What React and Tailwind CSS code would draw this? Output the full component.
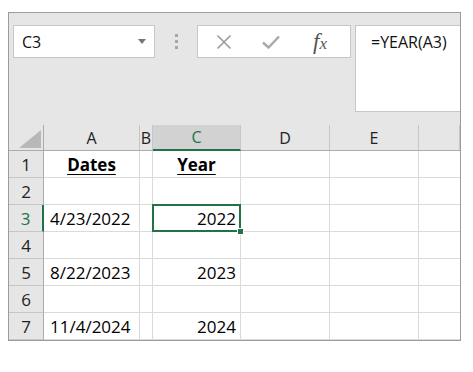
import React from 'react';

const cols = ['A', 'B', 'C', 'D', 'E', ''];

const rows = [
	{ n: 1, a: 'Dates', c: 'Year', head: true },
	{ n: 2, a: '', c: '' },
	{ n: 3, a: '4/23/2022', c: '2022', sel: true },
	{ n: 4, a: '', c: '' },
	{ n: 5, a: '8/22/2023', c: '2023' },
	{ n: 6, a: '', c: '' },
	{ n: 7, a: '11/4/2024', c: '2024' },
];

const gridCols = 'grid grid-cols-[35px_96px_13px_88px_89px_89px_1fr] grid-rows-[100%]';

const Toolbar = () => (
	<div className="flex items-start h-[112px] pt-[12px] pl-[4px]">
		<div className="w-[142px] h-[33px] bg-white border border-[#c6c6c6] flex items-center justify-between pl-[8px] pr-[8px]">
			<span className="text-[16px] text-[#111]">C3</span>
			<svg width="8" height="5" viewBox="0 0 8 5">
				<path d="M0 0 L8 0 L4 5 Z" fill="#777" />
			</svg>
		</div>
		<div className="w-[42px] h-[33px] flex flex-col items-center justify-center gap-[3px]">
			<div className="w-[3px] h-[3px] bg-[#a6a6a6]" />
			<div className="w-[3px] h-[3px] bg-[#a6a6a6]" />
			<div className="w-[3px] h-[3px] bg-[#a6a6a6]" />
		</div>
		<div className="w-[154px] h-[33px] bg-white border border-[#c6c6c6] flex items-center">
			<div className="w-[50px] flex justify-center pl-[2px]">
				<svg width="16" height="16" viewBox="0 0 16 16">
					<path d="M1.5 1.5 L14.5 14.5 M14.5 1.5 L1.5 14.5" stroke="#9b9b9b" strokeWidth="1.6" fill="none" />
				</svg>
			</div>
			<div className="w-[46px] flex justify-center">
				<svg width="18" height="14" viewBox="0 0 18 14">
					<path d="M1 7.5 L6.5 12.5 L17 1.5" stroke="#a8a8a8" strokeWidth="2.4" fill="none" />
				</svg>
			</div>
			<div className="flex-1 flex justify-center pr-[4px] leading-none">
				<span className="text-[23px] italic text-[#555] font-['Liberation_Serif',serif]">
					f<span className="text-[17px]">x</span>
				</span>
			</div>
		</div>
		<div className="ml-[4px] flex-1 h-[87px] bg-white border-t border-b border-l border-[#c6c6c6] pl-[15px] pt-[4px]">
			<span className="text-[16px] text-[#111]">=YEAR(A3)</span>
		</div>
	</div>
);

const HeaderRow = () => (
	<div className={`${gridCols} h-[26px] border-b border-[#ababab]`}>
		<div className="relative border-r border-[#ababab]">
			<svg className="absolute right-[2px] bottom-[2px]" width="22" height="18" viewBox="0 0 22 18">
				<path d="M22 0 L22 18 L0 18 Z" fill="#b8b8b8" />
			</svg>
		</div>
		{cols.map((c, i) => {
			const active = c === 'C';
			return (
				<div
					key={i}
					className={
						active
							? 'flex items-center justify-center bg-[#d2d2d2] border-r border-[#c6c6c6] text-[#217346] text-[16px] border-b-2 border-b-[#217346] -mb-[1px]'
							: 'flex items-center justify-center border-r border-[#c6c6c6] text-[#222] text-[16px]'
					}
				>
					{c}
				</div>
			);
		})}
	</div>
);

const Row = ({ row }) => (
	<div className={`${gridCols} h-[27px] leading-[20px]`}>
		<div
			className={
				row.sel
					? 'flex items-center justify-center pt-[1px] border-b border-[#c6c6c6] border-r-2 border-r-[#217346] text-[#217346] text-[17px]'
					: 'flex items-center justify-center pt-[1px] border-b border-[#c6c6c6] border-r border-r-[#ababab] text-[#222] text-[17px]'
			}
		>
			{row.n}
		</div>
		<div className={`flex items-center pt-[2px] border-r border-b border-[#dadada] bg-white text-[17px] text-[#000] ${row.head ? 'justify-center' : 'pl-[6px]'}`}>
			{row.head ? <span className="font-bold underline underline-offset-[3px]">{row.a}</span> : row.a}
		</div>
		<div className="border-r border-b border-[#dadada] bg-white" />
		<div className={`relative flex items-center pt-[2px] border-r border-b border-[#dadada] bg-white text-[17px] text-[#000] ${row.head ? 'justify-center' : 'justify-end pr-[4px]'}`}>
			{row.head ? <span className="font-bold underline underline-offset-[3px]">{row.c}</span> : row.c}
			{row.sel && (
				<div className="absolute z-10 -left-[1px] -top-[1px] -right-[1px] -bottom-[1px] border-2 border-[#217346]">
					<div className="absolute -right-[5px] -bottom-[5px] w-[7px] h-[7px] bg-[#217346] border border-white" />
				</div>
			)}
		</div>
		<div className="border-r border-b border-[#dadada] bg-white" />
		<div className="border-r border-b border-[#dadada] bg-white" />
		<div className="border-b border-[#dadada] bg-white" />
	</div>
);

const App = () => {
	return (
		<div className="w-[473px] h-[372px] bg-white pt-[12px] pl-[8px] font-['Open_Sans','Liberation_Sans',sans-serif]">
			<div className="w-[453px] border border-[#9c9c9c] bg-[#e6e6e6]">
				<Toolbar />
				<HeaderRow />
				{rows.map((r) => (
					<Row key={r.n} row={r} />
				))}
			</div>
		</div>
	);
};

export default App;
